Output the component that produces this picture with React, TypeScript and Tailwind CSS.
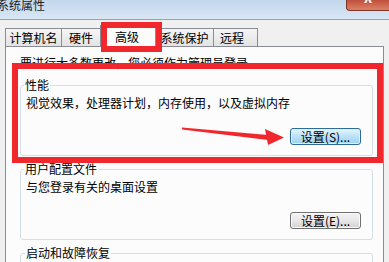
import React from "react";

function Tab({ label, w, pl }: { label: string; w: string; pl?: string }) {
  return (
    <div
      className={`-ml-px flex h-[18px] items-center border border-b-0 border-[#898c95] bg-gradient-to-b from-[#f5f5f5] to-[#e3e3e3] ${w} ${pl ?? "justify-center"}`}
    >
      <span className="leading-[14px]">{label}</span>
    </div>
  );
}

export default function App() {
  return (
    <div className="relative h-[262px] w-[389px] overflow-hidden bg-[#f0f0f0] font-['Noto_Sans_CJK_SC','Noto_Sans',sans-serif] text-[12px] leading-[14px] text-black">
      {/* title bar */}
      <div className="flex h-[20px] items-start justify-between border-b border-[#8ea4bd] bg-gradient-to-b from-[#c3d7ed] to-[#d9e6f4]">
        <span className="-ml-[3px] -mt-[2px] text-[12px] leading-[14px] text-[#1e1e1e]">系统属性</span>
        <div className="flex h-[11px] w-[43px] justify-center overflow-hidden rounded-bl-[4px] border-b border-l border-[#7b3426] bg-gradient-to-b from-[#c04f39] to-[#da8168]">
          <span className="-mt-[9px] text-[13px] font-bold leading-[14px] text-white">X</span>
        </div>
      </div>

      {/* tabs */}
      <div className="flex h-[26px] items-end pl-[6px]">
        <Tab label="计算机名" w="w-[57px]" />
        <Tab label="硬件" w="w-[40px]" />
        <div className="relative z-10 -mb-px -ml-px flex h-[22px] w-[56px] items-center border border-b-0 border-[#898c95] bg-[#fcfcfc] pl-[14px]">
          <span>高级</span>
        </div>
        <Tab label="系统保护" w="w-[59px]" />
        <Tab label="远程" w="w-[45px]" pl="pl-[6px]" />
      </div>

      {/* panel */}
      <div className="mx-[5px] h-[240px] border border-[#898c95] bg-[#fcfcfc] pl-[14px] pr-[10px] pt-[9px]">
        <p>要进行大多数更改，您必须作为管理员登录。</p>

        <fieldset className="mt-[8px] rounded-[3px] border border-[#d5dfe5] pb-[10px] pl-[5px] pr-[11px]">
          <legend className="-ml-[2px] px-[1px]">性能</legend>
          <p className="mt-[4px]">视觉效果，处理器计划，内存使用，以及虚拟内存</p>
          <div className="mt-[18px] flex justify-end">
            <button className="flex h-[17px] w-[71px] items-center justify-center rounded-[3px] border border-[#2f6a98] bg-gradient-to-b from-[#e6f5fd] via-[#b9e2f8] to-[#9dd3f2] text-[12px] leading-[14px] shadow-[inset_0_0_0_1px_#d8f0fc]">
              设置(S)...
            </button>
          </div>
        </fieldset>

        <fieldset className="mt-[6px] rounded-[3px] border border-[#d5dfe5] pb-[10px] pl-[5px] pr-[11px]">
          <legend className="-ml-[2px] px-[1px]">用户配置文件</legend>
          <p className="mt-[4px]">与您登录有关的桌面设置</p>
          <div className="mt-[18px] flex justify-end">
            <button className="flex h-[17px] w-[71px] items-center justify-center rounded-[3px] border border-[#707070] bg-gradient-to-b from-[#f3f3f3] via-[#e8e8e8] to-[#d2d2d2] text-[12px] leading-[14px] shadow-[inset_0_0_0_1px_#fafafa]">
              设置(E)...
            </button>
          </div>
        </fieldset>

        <fieldset className="mt-[6px] h-[40px] rounded-[3px] border border-[#d5dfe5] pl-[5px]">
          <legend className="-ml-[1px] px-[1px]">启动和故障恢复</legend>
        </fieldset>
      </div>

      {/* annotations */}
      <div className="pointer-events-none absolute left-[101px] top-[22px] z-20 h-[30px] w-[61px] border-[6px] border-[#f0282d]" />
      <div className="pointer-events-none absolute left-[12px] top-[63px] z-20 h-[100px] w-[371px] border-[6px] border-[#f0282d]" />
      <svg className="pointer-events-none absolute left-0 top-0 z-20" width="389" height="262" viewBox="0 0 389 262">
        <polygon points="182,127.5 182,129.5 268,140 268,135" fill="#f0282d" />
        <polygon points="265,129 284,137.5 268,145" fill="#f0282d" />
      </svg>
    </div>
  );
}
